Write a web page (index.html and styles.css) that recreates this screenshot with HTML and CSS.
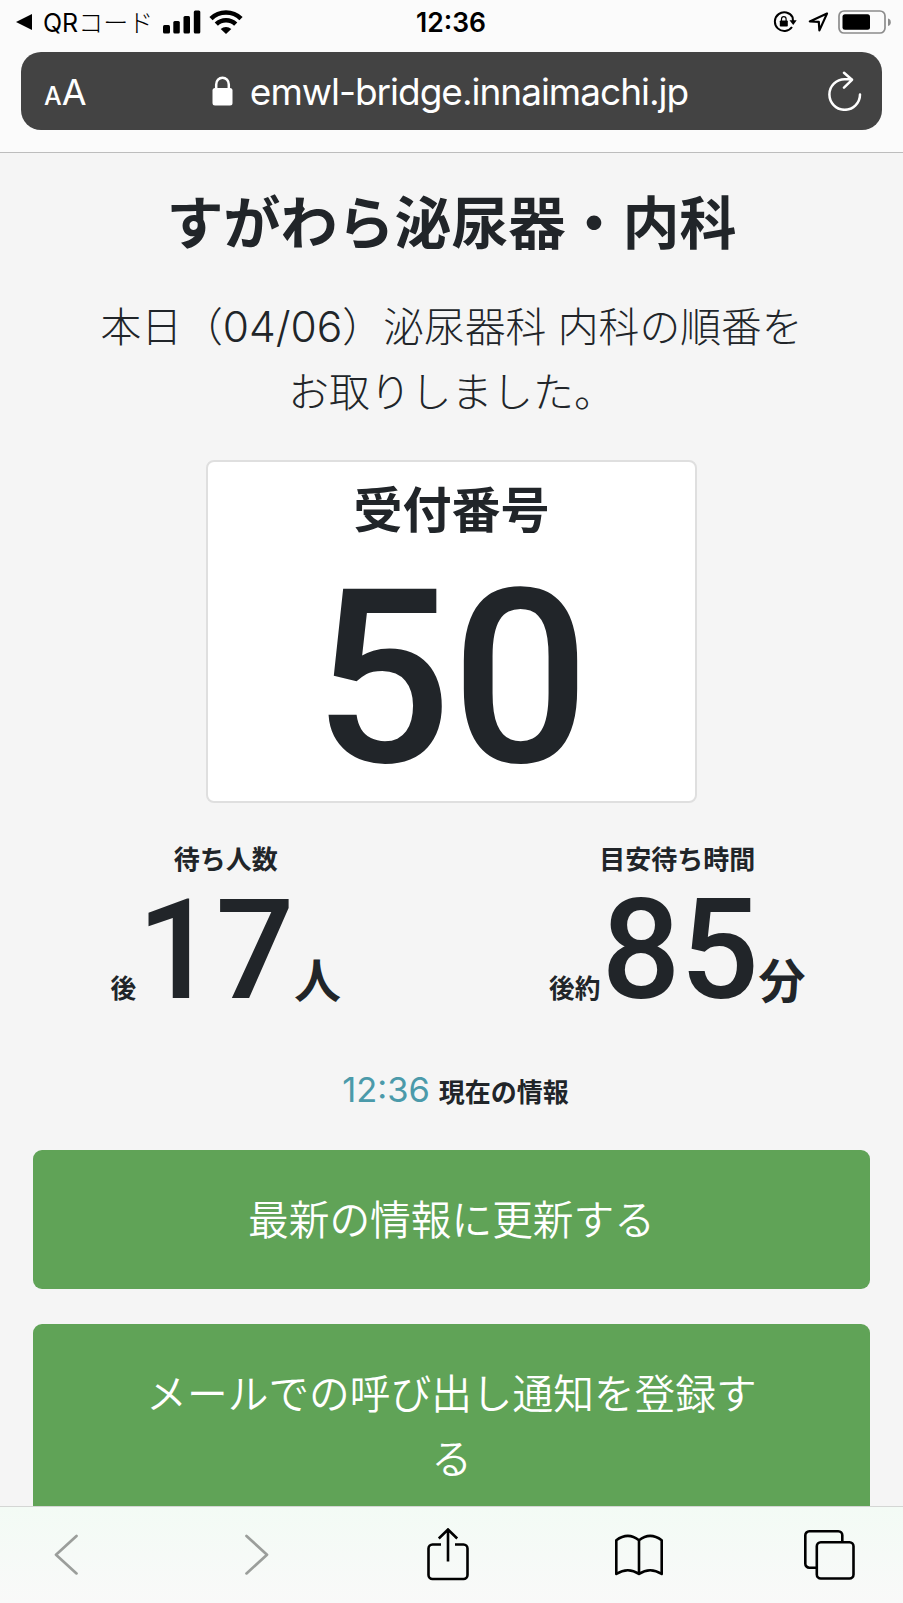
FILE: index.html
```html
<!DOCTYPE html>
<html lang="ja">
<head>
    <meta charset="UTF-8">
    <meta name="viewport" content="width=device-width, initial-scale=1.0">
    <title>すがわら泌尿器・内科</title>
    <link rel="stylesheet" href="styles.css">
</head>
<body>

    <header class="browser-top">
        <div class="status-bar">
            <div class="status-left">
                <svg class="back-arrow" width="17" height="16" viewBox="0 0 17 16"><path d="M16 0v16L0 8z"/></svg>
                <span class="back-app">QR<span class="kana">コード</span></span>
                <svg width="38" height="24" viewBox="0 0 38 24">
                    <rect x="0" y="15" width="7" height="8.5" rx="1.5"/>
                    <rect x="10.3" y="11" width="6.5" height="12.5" rx="1.5"/>
                    <rect x="20.5" y="6" width="6.5" height="17.5" rx="1.5"/>
                    <rect x="30.8" y="0.5" width="6.5" height="23" rx="1.5"/>
                </svg>
                <svg class="wifi" width="34" height="24" viewBox="0 0 34 24">
                    <path d="M2 8.6a21.5 21.5 0 0 1 30 0M7.3 14.2a14 14 0 0 1 19.4 0" fill="none" stroke="#000" stroke-width="4.6"/>
                    <path d="M17 24l-5.3-5a8 8 0 0 1 10.6 0z"/>
                </svg>
            </div>
            <div class="status-time">12:36</div>
            <div class="status-right">
                <svg width="24" height="22" viewBox="0 0 24 22">
                    <path d="M19 16A9.4 9.4 0 1 1 19.6 6.2L20 10" fill="none" stroke="#000" stroke-width="2"/>
                    <path d="M16.5 9.2h7.2L20.2 14z"/>
                    <rect x="6.8" y="9.5" width="8" height="6" rx=".8"/>
                    <path d="M8.5 10V8a2.300 2.300 0 0 1 4.600 0v2" fill="none" stroke="#000" stroke-width="1.200"/>
                </svg>
                <svg class="location" width="21" height="20" viewBox="0 0 21 20"><path d="M19 1.600L1.800 9.400l9 .5.6 8.500z" fill="none" stroke="#000" stroke-width="2.200" stroke-linejoin="round"/></svg>
                <svg class="battery" width="54" height="24" viewBox="0 0 54 24">
                    <rect x="1" y="1" width="46" height="22" rx="5" fill="none" stroke="#8c8c8c" stroke-width="1.700"/>
                    <rect x="4.500" y="4.300" width="27.500" height="15.400" rx="2.500"/>
                    <path d="M50 8.500q2.800.5 2.800 3.700t-2.800 3.700z" fill="#8c8c8c"/>
                </svg>
            </div>
        </div>
        <div class="address-bar">
            <div class="text-size"><span class="small-a">A</span>A</div>
            <div class="address">
                <svg class="lock" width="21" height="30" viewBox="0 0 21 30">
                    <rect x="0.500" y="12" width="20" height="17.500" rx="2.500" fill="#fff"/>
                    <path d="M4.200 13V8.500a6.300 6.800 0 0 1 12.600 0V13" fill="none" stroke="#fff" stroke-width="2.500"/>
                </svg>
                <span class="url">emwl-bridge.innaimachi.jp</span>
            </div>
            <svg class="reload" width="34" height="40" viewBox="0 0 34 40">
                <path d="M32 23.500a15.300 15.300 0 1 1-15.300-15.300h7M16 1.800l8 7-8 7.800" fill="none" stroke="#fff" stroke-width="2.500" stroke-linecap="round" stroke-linejoin="round"/>
            </svg>
        </div>
    </header>

    <main class="page">
        <h1 class="clinic">すがわら泌尿器・内科</h1>
        <p class="message">本日（<span class="date">04/06</span>）泌尿器科 内科の順番を<br>お取りしました。</p>

        <section class="ticket">
            <h2 class="ticket-label">受付番号</h2>
            <div class="ticket-number">50</div>
        </section>

        <section class="waiting">
            <div class="wait">
                <h3 class="wait-label">待ち人数</h3>
                <div class="wait-value">後<span class="num">17</span><span class="unit">人</span></div>
            </div>
            <div class="wait">
                <h3 class="wait-label">目安待ち時間</h3>
                <div class="wait-value">後約<span class="num">85</span><span class="unit">分</span></div>
            </div>
        </section>

        <p class="updated"><span class="updated-time">12:36</span>現在の情報</p>

        <button class="btn">最新の情報に更新する</button>
        <button class="btn">メールでの呼び出し通知を登録す<br>る</button>
    </main>

    <nav class="toolbar">
        <svg width="24" height="42" viewBox="0 0 24 42"><path d="M22.500 2L2 20.700l20.500 18.700" fill="none" stroke="#9b9e9b" stroke-width="2.700" stroke-linecap="round" stroke-linejoin="round"/></svg>
        <svg width="24" height="42" viewBox="0 0 24 42"><path d="M1.500 2L22 20.700 1.500 39.400" fill="none" stroke="#9b9e9b" stroke-width="2.700" stroke-linecap="round" stroke-linejoin="round"/></svg>
        <svg class="share" width="42" height="53" viewBox="0 0 42 53"><path d="M14 16.500H5.500a4 4 0 0 0-4 4V47a4 4 0 0 0 4 4h31a4 4 0 0 0 4-4V20.500a4 4 0 0 0-4-4H28M21 33.500V2M11.800 10.500L21 1.500l9.200 9" fill="none" stroke="#000" stroke-width="2.600"/></svg>
        <svg class="book" width="48" height="42" viewBox="0 0 48 42"><path d="M24 6.200Q13-2.500 1.300 6.200V40q11.700-7.500 22.700 0 11-7.500 22.700 0V6.200Q35-2.500 24 6.200V40" fill="none" stroke="#000" stroke-width="2.600" stroke-linejoin="round"/></svg>
        <svg class="tabs" width="51" height="50" viewBox="0 0 51 50">
            <path d="M12.800 37.700H5.300a4 4 0 0 1-4-4V5.300a4 4 0 0 1 4-4h29a4 4 0 0 1 4 4v7" fill="none" stroke="#000" stroke-width="2.600"/>
            <rect x="12.800" y="12.300" width="36.700" height="36.200" rx="4" fill="none" stroke="#000" stroke-width="2.600"/>
        </svg>
    </nav>

</body>
</html>
```
FILE: styles.css
```css
* {
    box-sizing: border-box;
}
body {
    margin: 0;
    height: 1603px;
    display: flex;
    flex-direction: column;
    overflow: hidden;
    background: #f5f5f5;
    color: #212529;
    font-family: Inter, "Noto Sans CJK JP", sans-serif;
}
h1, h2, h3, p {
    margin: 0;
    font-weight: 600;
}
svg {
    display: block;
    flex: none;
}

/* browser header */
.browser-top {
    flex: none;
    height: 153px;
    padding: 0 21px;
    background: #fbfbfb;
    border-bottom: 1px solid #bdbdbd;
}
.status-bar {
    display: grid;
    grid-template-columns: 1fr 90px 1fr;
    align-items: center;
    height: 52px;
    padding-bottom: 8px;
    margin: 0 -10px 0 -5px;
    color: #000;
}
.status-left, .status-right {
    display: flex;
    align-items: center;
}
.back-app {
    width: 109px;
    margin: 1px 11px 0 10px;
    font-size: 25px;
    line-height: 36px;
    white-space: nowrap;
}
.kana {
    font-weight: 300;
}
.wifi {
    margin-left: 8px;
}
.status-time {
    padding: 0 6px 0 0;
    font-size: 26.5px;
    font-weight: 600;
    text-align: center;
}
.status-right {
    justify-content: flex-end;
}
.location {
    margin-left: 11px;
}
.battery {
    margin-left: 9px;
}
.address-bar {
    display: flex;
    align-items: center;
    justify-content: space-between;
    height: 78px;
    padding: 0 20px 0 23px;
    background: #434343;
    border-radius: 20px;
    color: #fff;
}
.text-size {
    width: 42px;
    padding-top: 5px;
    font-size: 36px;
    line-height: 44px;
    white-space: nowrap;
}
.small-a {
    font-size: 25px;
    font-weight: 500;
}
.address {
    display: flex;
    align-items: center;
    margin-right: 14px;
}
.url {
    margin: 2px 0 0 17px;
    font-size: 37px;
    line-height: 46px;
    letter-spacing: -1.02px;
}

/* page content */
.page {
    flex: 1;
    min-height: 0;
    overflow: hidden;
    padding: 31px 33px 0;
    text-align: center;
}
.clinic {
    font-size: 57px;
    line-height: 80px;
    font-weight: 700;
}
.message {
    margin-top: 31px;
    font-size: 40.8px;
    line-height: 65px;
    font-weight: 300;
}
.date {
    font-size: 42.5px;
    line-height: 1;
}
.ticket {
    width: 491px;
    height: 343px;
    margin: 35px auto 0;
    padding-top: 13px;
    background: #fff;
    border: 2px solid #dfdfdf;
    border-radius: 8px;
}
.ticket-label {
    font-size: 49px;
    line-height: 72px;
}
.ticket-number {
    font-family: Roboto, sans-serif;
    font-size: 243px;
    font-weight: 500;
    line-height: 265px;
}
.waiting {
    display: flex;
    margin: 38px -33px 0;
}
.wait {
    flex: 1;
}
.wait-label {
    font-size: 26px;
    line-height: 38px;
}
.wait-value {
    display: flex;
    justify-content: center;
    align-items: baseline;
    height: 138px;
    font-size: 25.7px;
    font-weight: 600;
    line-height: 144px;
}
.num {
    margin-left: 1px;
    font-family: Roboto, sans-serif;
    font-size: 139px;
    font-weight: 500;
    letter-spacing: -0.5px;
}
.unit {
    font-size: 47px;
}
.updated {
    display: flex;
    justify-content: center;
    align-items: baseline;
    height: 50px;
    margin-top: 48px;
    padding-left: 8px;
    font-size: 26px;
    line-height: 50px;
}
.updated-time {
    margin-right: 9px;
    font-size: 34.5px;
    font-weight: 400;
    color: #4b9aaa;
}
.btn {
    display: block;
    width: 837px;
    margin-top: 35px;
    padding: 38px 0 36px;
    border: none;
    border-radius: 9px;
    background: #60a357;
    color: #fff;
    font-family: inherit;
    font-size: 40.7px;
    font-weight: 350;
    line-height: 65px;
}

/* browser toolbar */
.toolbar {
    flex: none;
    display: grid;
    grid-template-columns: repeat(5, 191px);
    align-items: center;
    justify-items: center;
    height: 97px;
    margin-right: -22px;
    margin-left: -30px;
    background: linear-gradient(#f3fbf5, #f9f9f9);
    border-top: 1px solid #d4d6d4;
}
.share {
    margin-bottom: 2px;
}
```
